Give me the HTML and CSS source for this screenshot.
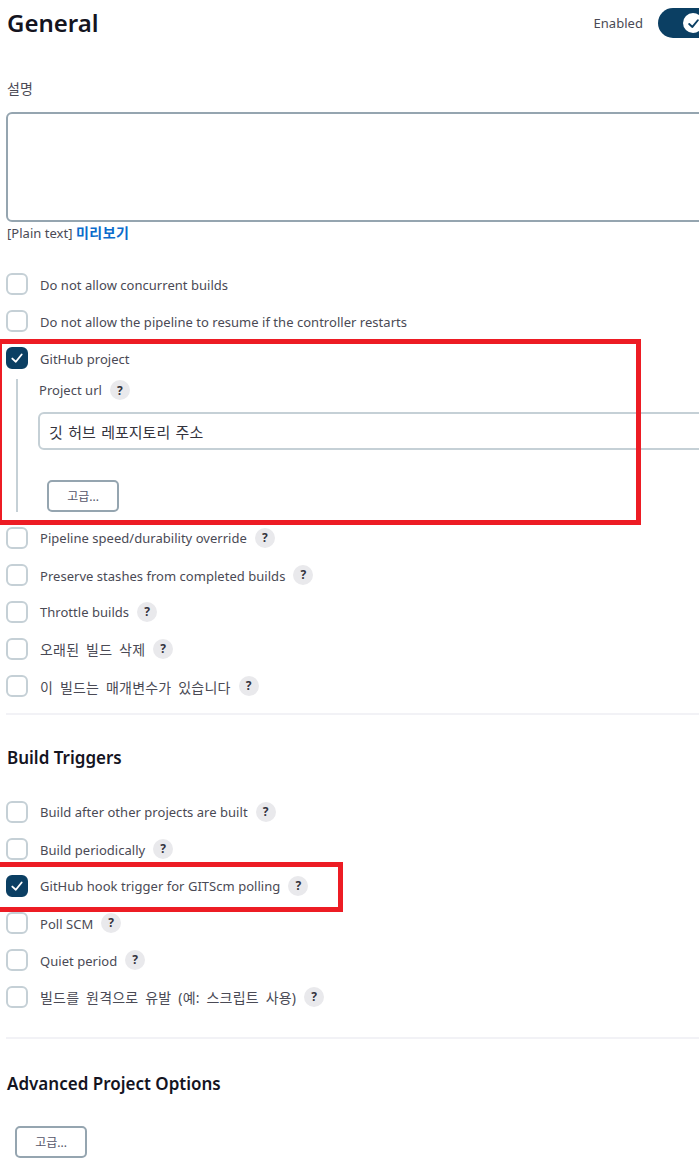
FILE: index.html
```html
<!DOCTYPE html>
<html lang="en">

<head>
    <meta charset="UTF-8">
    <title>General</title>
    <link rel="stylesheet" href="styles.css">
</head>

<body>
    <div class="page">
        <div class="header">
            <h1>General</h1>
            <div class="enable">
                <span>Enabled</span>
                <div class="toggle">
                    <div class="knob">
                        <svg viewBox="0 0 12 12" width="13" height="13"><path d="M2 6.5 L5 9.2 L10 3" fill="none" stroke="#0b3f63" stroke-width="1.8" stroke-linecap="round" stroke-linejoin="round"/></svg>
                    </div>
                </div>
            </div>
        </div>

        <div class="desc-label ko">설명</div>
        <textarea class="desc"></textarea>
        <div class="desc-foot">[Plain text] <a href="#">미리보기</a></div>

        <div class="options first">
            <label class="row low"><span class="box"></span><span>Do not allow concurrent builds</span></label>
            <label class="row low"><span class="box"></span><span>Do not allow the pipeline to resume if the controller restarts</span></label>
            <label class="row low"><span class="box on"><svg viewBox="0 0 12 12" width="14" height="14"><path d="M2 6.5 L5 9.2 L10 3" fill="none" stroke="#fff" stroke-width="1.6" stroke-linecap="round" stroke-linejoin="round"/></svg></span><span>GitHub project</span></label>
            <div class="nested">
                <div class="field-label">Project url <span class="help">?</span></div>
                <input class="url" type="text" value="깃 허브 레포지토리 주소">
                <button class="btn">고급...</button>
            </div>
            <label class="row"><span class="box"></span><span>Pipeline speed/durability override</span><span class="help">?</span></label>
            <label class="row low"><span class="box"></span><span>Preserve stashes from completed builds</span><span class="help">?</span></label>
            <label class="row"><span class="box"></span><span>Throttle builds</span><span class="help">?</span></label>
            <label class="row"><span class="box"></span><span class="ko">오래된 빌드 삭제</span><span class="help">?</span></label>
            <label class="row low"><span class="box"></span><span class="ko">이 빌드는 매개변수가 있습니다</span><span class="help">?</span></label>
        </div>

        <hr class="divider">
        <h2 class="triggers">Build Triggers</h2>

        <div class="options">
            <label class="row"><span class="box"></span><span>Build after other projects are built</span><span class="help">?</span></label>
            <label class="row low"><span class="box"></span><span>Build periodically</span><span class="help">?</span></label>
            <label class="row"><span class="box on"><svg viewBox="0 0 12 12" width="14" height="14"><path d="M2 6.5 L5 9.2 L10 3" fill="none" stroke="#fff" stroke-width="1.6" stroke-linecap="round" stroke-linejoin="round"/></svg></span><span>GitHub hook trigger for GITScm polling</span><span class="help">?</span></label>
            <label class="row low"><span class="box"></span><span>Poll SCM</span><span class="help">?</span></label>
            <label class="row low"><span class="box"></span><span>Quiet period</span><span class="help">?</span></label>
            <label class="row"><span class="box"></span><span class="ko">빌드를 원격으로 유발 (예: 스크립트 사용)</span><span class="help">?</span></label>
        </div>

        <hr class="divider second">
        <h2 class="advanced">Advanced Project Options</h2>
        <button class="btn btn-advanced">고급...</button>

        <div class="mark mark-project"></div>
        <div class="mark mark-hook"></div>
    </div>
</body>

</html>
```

FILE: styles.css
```css
html,
body {
    margin: 0;
    height: 1168px;
    overflow: hidden;
    background: #fff;
}

body {
    font-family: "Noto Sans", "Noto Sans CJK KR", sans-serif;
    font-size: 13px;
    letter-spacing: 0.03px;
    color: #4a4a55;
}

.page {
    position: relative;
    width: 720px;
    height: 1168px;
    padding-left: 6px;
    box-sizing: border-box;
}

.ko {
    font-size: 14px;
    word-spacing: 3px;
    letter-spacing: 0.2px;
}

.header {
    display: flex;
    justify-content: space-between;
    align-items: center;
    height: 30px;
    padding: 8px 0 0 1px;
}

h1 {
    margin: 0;
    font-size: 24px;
    line-height: 32px;
    font-weight: 600;
    letter-spacing: 0;
    color: #14141f;
}

.enable {
    display: flex;
    align-items: center;
    gap: 15px;
}

.toggle {
    width: 62px;
    height: 30px;
    border-radius: 15px;
    background: #0b3f63;
    display: flex;
    align-items: center;
    padding-left: 25px;
    box-sizing: border-box;
}

.knob {
    width: 20px;
    height: 20px;
    border-radius: 50%;
    background: #fff;
    display: flex;
    align-items: center;
    justify-content: center;
}

.desc-label {
    margin: 41px 0 0 1px;
    line-height: 20px;
}

.desc {
    display: block;
    width: 704px;
    height: 110px;
    margin-top: 13px;
    box-sizing: border-box;
    border: 2px solid #95a5b0;
    border-radius: 6px;
    background: #fff;
    outline: none;
}

.desc-foot {
    margin: 1px 0 0 1px;
    line-height: 20px;
}

.desc-foot a {
    font-size: 14px;
    letter-spacing: 0.5px;
    color: #0b6bcb;
    font-weight: 700;
    text-decoration: none;
}

.options.first {
    margin-top: 22px;
}

.row {
    display: flex;
    align-items: center;
    height: 37px;
}

.low > span:not(.box):not(.help) {
    padding-top: 2px;
}

.box {
    flex: none;
    width: 22px;
    height: 22px;
    margin-right: 12px;
    box-sizing: border-box;
    border: 2px solid #c5d0d6;
    border-radius: 6px;
    display: flex;
    align-items: center;
    justify-content: center;
}

.box.on {
    background: #0b3f63;
    border-color: #0b3f63;
}

.help {
    flex: none;
    display: inline-flex;
    align-items: center;
    justify-content: center;
    width: 20px;
    height: 20px;
    margin-left: 8px;
    border-radius: 50%;
    background: #e9e9ec;
    color: #33333d;
    font-size: 12px;
    font-weight: 700;
}

.nested {
    margin: 3px 0 7px 10px;
    padding-left: 21px;
    border-left: 2px solid #c5d0d6;
    height: 133px;
}

.field-label {
    display: flex;
    align-items: center;
    height: 22px;
}

.url {
    display: block;
    width: 700px;
    height: 38px;
    margin: 11px 0 0 -1px;
    padding: 0 9px;
    box-sizing: border-box;
    border: 2px solid #c5d0d6;
    border-radius: 6px;
    font-family: inherit;
    font-size: 15px;
    word-spacing: 1.5px;
    color: #33333d;
    outline: none;
}

.btn {
    display: block;
    width: 72px;
    height: 32px;
    margin: 30px 0 0 8px;
    padding: 0;
    background: #fff;
    border: 2px solid #95a5b0;
    border-radius: 5px;
    font-family: inherit;
    font-size: 12px;
    color: #55556a;
}

.divider {
    height: 2px;
    margin: 9px 0 0;
    border: 0;
    background: #f2f2f6;
}

h2 {
    margin: 0 0 0 1px;
    font-size: 17px;
    line-height: 24px;
    font-weight: 600;
    letter-spacing: 0;
    color: #14141f;
}

.triggers {
    margin-top: 31px;
    margin-bottom: 23px;
}

.divider.second {
    margin-top: 22px;
}

.advanced {
    margin-top: 33px;
}

.btn-advanced {
    margin: 30px 0 0 9px;
}

.mark {
    position: absolute;
    box-sizing: border-box;
    border: 5px solid #ed1c24;
}

.mark-project {
    left: -3px;
    top: 339px;
    width: 644px;
    height: 186px;
}

.mark-hook {
    left: -8px;
    top: 862px;
    width: 351px;
    height: 50px;
}
```
